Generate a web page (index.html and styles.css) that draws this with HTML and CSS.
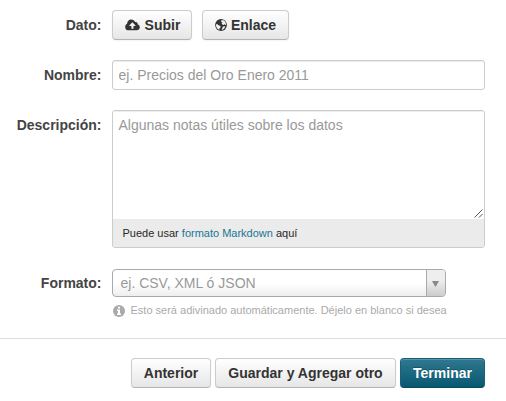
FILE: index.html
```
<!DOCTYPE html>
<html lang="es">
<head>
<meta charset="utf-8">
<title>Recurso</title>
<link rel="stylesheet" href="styles.css">
</head>
<body>
<form class="resource-form">
  <div class="row">
    <span class="label">Dato:</span>
    <div class="uploads">
      <button type="button" class="btn upload">
        <svg class="icon cloud" viewBox="0 0 15 12"><path fill-rule="evenodd" d="M3.6 11.3A3.4 3.4 0 0 1 .2 7.9C.2 6.500 1 5.300 2.100 4.800C2.100 2.300 3.900.5 6.200.5C8 .5 9.500 1.500 10.100 3.100C11.600 2.500 13 3.700 12.600 5.300C13.900 5.600 14.800 6.800 14.800 8.200C14.800 10 13.400 11.300 11.700 11.300ZM7.400 3.300L4.300 6.400V6.900H6.400V9.700H8.500V6.900H10.500V6.400Z"/></svg>
        <span>Subir</span>
      </button>
      <button type="button" class="btn link">
        <svg class="icon globe" viewBox="0 0 12 12"><circle cx="6" cy="6" r="5.900"/><path class="land" d="M6.200 1.200L8.500 1.200L10.300 2.800L11 4.900L10.700 6.200L9.600 5.200L8.300 6L7 5.300L6.600 4.200L7.600 3.400L6.100 2.700ZM1 5.200L2.400 5.200L3.600 6.300L5.700 7.300L5.300 8.700L4.300 9.500L4.500 10.900L2.500 9.700L1.100 7.600ZM8 7.500L10.300 7.200L9.500 9.300L7.300 10.900L6.700 10.500Z"/></svg>
        <span>Enlace</span>
      </button>
    </div>
  </div>
  <div class="row">
    <label class="label" for="name">Nombre:</label>
    <input id="name" class="field" type="text" placeholder="ej. Precios del Oro Enero 2011">
  </div>
  <div class="row">
    <label class="label" for="description">Descripción:</label>
    <div class="editor">
      <textarea id="description" placeholder="Algunas notas útiles sobre los datos"></textarea>
      <svg class="grip" viewBox="0 0 9 9"><path d="M.5 8.500L8.500.5M5 8.500L8.500 5"/></svg>
      <div class="editor-info">Puede usar <a>formato Markdown</a> aquí</div>
    </div>
  </div>
  <div class="row">
    <span class="label">Formato:</span>
    <div>
      <div class="select">
        <span class="choice">ej. CSV, XML ó JSON</span>
        <span class="arrow"><svg viewBox="0 0 7 6"><path d="M0 0H7L3.500 6Z"/></svg></span>
      </div>
      <div class="hint">
        <svg viewBox="0 0 12 12"><circle cx="6" cy="6" r="6"/><path d="M5 1.800H7V3.500H5ZM4 4.600H7V8.600H8V10H4V8.600H5V6H4Z"/></svg>
        <span>Esto será adivinado automáticamente. Déjelo en blanco si desea</span>
      </div>
    </div>
  </div>
  <div class="actions">
    <button type="button" class="btn previous">Anterior</button>
    <button type="button" class="btn again">Guardar y Agregar otro</button>
    <button type="button" class="btn primary">Terminar</button>
  </div>
</form>
</body>
</html>
```
FILE: styles.css
```
* { box-sizing: border-box; }
body {
  margin: 0;
  background: #fff;
  color: #444;
  font: 14px/20px "Liberation Sans", Arial, sans-serif;
  overflow: hidden;
}
.resource-form { padding-top: 10px; }
.row {
  display: grid;
  grid-template-columns: 101.500px 373px;
  column-gap: 10.500px;
  margin-bottom: 20px;
}
.label {
  padding-top: 5px;
  text-align: right;
  font-weight: bold;
}
.uploads { display: flex; gap: 10px; }
.btn {
  display: flex;
  align-items: center;
  justify-content: center;
  height: 30px;
  padding: 0;
  border: 1px solid #ccc;
  border-bottom-color: #b3b3b3;
  border-radius: 4px;
  background: linear-gradient(#fff, #e6e6e6);
  box-shadow: inset 0 1px 0 rgba(255,255,255,.2), 0 1px 2px rgba(0,0,0,.05);
  color: #333;
  font: bold 14px/20px "Liberation Sans", Arial, sans-serif;
  white-space: nowrap;
}
.upload { width: 80px; gap: 5px; padding-left: 1px; }
.link { width: 87px; gap: 4px; }
.icon { fill: #333; }
.cloud { width: 15px; height: 12px; }
.globe { width: 12px; height: 12px; }
.land { fill: #f1f1f1; }
.field {
  width: 373px;
  height: 30px;
  padding: 4px 5.500px;
  border: 1px solid #ccc;
  border-radius: 3px;
  box-shadow: inset 0 1px 1px rgba(0,0,0,.075);
  font: 14px/20px "Liberation Sans", Arial, sans-serif;
}
::placeholder { color: #999; opacity: 1; }
.editor {
  position: relative;
  height: 138px;
  border: 1px solid #ccc;
  border-radius: 3px;
  overflow: hidden;
}
.editor textarea {
  display: block;
  width: 100%;
  height: 108px;
  padding: 4px 5.500px;
  border: 0;
  resize: none;
  box-shadow: inset 0 1px 1px rgba(0,0,0,.075);
  font: 14px/20px "Liberation Sans", Arial, sans-serif;
}
.grip {
  position: absolute;
  right: 1px;
  top: 98px;
  width: 9px;
  height: 9px;
  fill: none;
  stroke: #555;
}
.editor-info {
  height: 28px;
  padding-left: 9.500px;
  background: #ebebeb;
  color: #282828;
  font-size: 11px;
  line-height: 28px;
}
.editor-info a { color: #187794; }
.select {
  display: flex;
  width: 334px;
  height: 28px;
  margin-top: 1px;
  border: 1px solid #aaa;
  border-radius: 4px;
  background: linear-gradient(#fff 50%, #eee);
  overflow: hidden;
}
.choice {
  flex: 1;
  padding-left: 7.500px;
  color: #999;
  line-height: 27px;
}
.arrow {
  display: flex;
  align-items: center;
  justify-content: center;
  width: 19px;
  padding: 2px 1px 0 0;
  border-left: 1px solid #aaa;
  background: linear-gradient(#eee 40%, #ccc);
}
.arrow svg { width: 7px; height: 6px; fill: #888; }
.hint {
  display: flex;
  align-items: center;
  gap: 5.500px;
  height: 20px;
  margin-top: 3px;
  padding-left: 1px;
  color: #aaa;
  font-size: 11px;
  white-space: nowrap;
}
.hint svg { width: 12px; height: 12px; margin-top: 2px; fill: #aaa; }
.hint svg path { fill: #fff; }
.actions {
  display: flex;
  justify-content: flex-end;
  gap: 4px;
  margin-top: -2px;
  padding: 19px 21px 0 0;
  border-top: 1px solid #ddd;
}
.previous { width: 80px; }
.again { width: 181px; }
.primary {
  width: 85px;
  border-color: #19617a #19617a #06485c;
  background: linear-gradient(#2f7890, #085871);
  color: #fff;
  text-shadow: 0 -1px 0 rgba(0,0,0,.25);
}
```
